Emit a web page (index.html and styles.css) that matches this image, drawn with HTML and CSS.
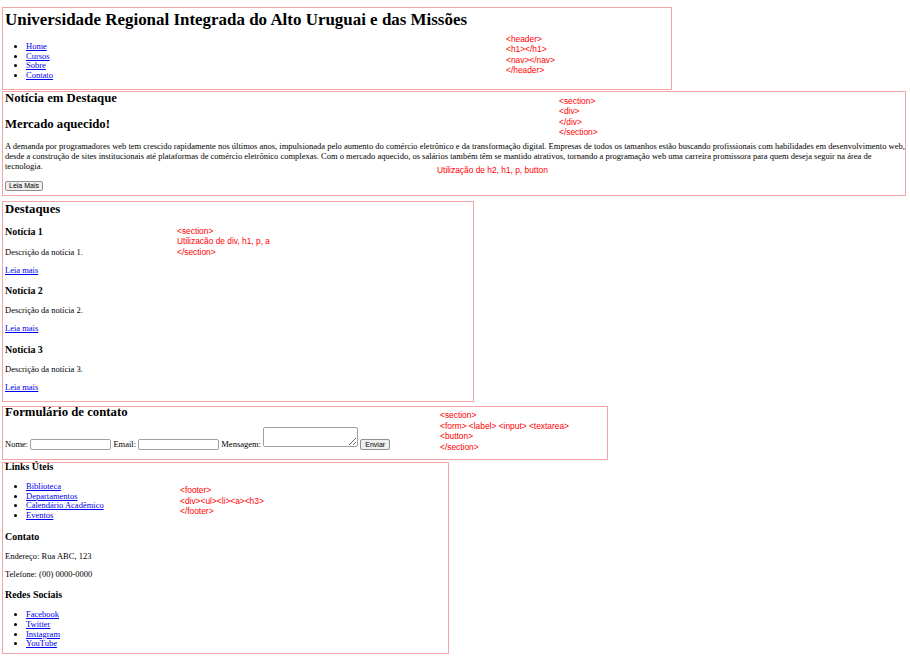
FILE: index.html
```html
<!DOCTYPE html>
<html lang="pt-BR">
<head>
    <meta charset="UTF-8">
    <meta name="viewport" content="width=device-width, initial-scale=1.0">
    <title>URI - Universidade Regional Integrada</title>
    <link rel="stylesheet" href="styles.css">
</head>
<body>
    <header class="box site-header">
        <h1>Universidade Regional Integrada do Alto Uruguai e das Missões</h1>
        <div class="row">
            <nav class="main-nav">
                <ul>
                    <li><a href="#">Home</a></li>
                    <li><a href="#">Cursos</a></li>
                    <li><a href="#">Sobre</a></li>
                    <li><a href="#">Contato</a></li>
                </ul>
            </nav>
            <div class="note note-header">&lt;header&gt;<br>&lt;h1&gt;&lt;/h1&gt;<br>&lt;nav&gt;&lt;/nav&gt;<br>&lt;/header&gt;</div>
        </div>
    </header>

    <section class="box featured">
        <div class="row">
            <div class="featured-titles">
                <h2>Notícia em Destaque</h2>
                <h1>Mercado aquecido!</h1>
            </div>
            <div class="note note-featured">&lt;section&gt;<br>&lt;div&gt;<br>&lt;/div&gt;<br>&lt;/section&gt;</div>
        </div>
        <p>A demanda por programadores web tem crescido rapidamente nos últimos anos, impulsionada pelo aumento do comércio eletrônico e da transformação digital. Empresas de todos os tamanhos estão buscando profissionais com habilidades em desenvolvimento web, desde a construção de sites institucionais até plataformas de comércio eletrônico complexas. Com o mercado aquecido, os salários também têm se mantido atrativos, tornando a programação web uma carreira promissora para quem deseja seguir na área de tecnologia.</p>
        <p class="note usage">Utilização de h2, h1, p, button</p>
        <button class="btn">Leia Mais</button>
    </section>

    <section class="box highlights">
        <h2>Destaques</h2>
        <div class="row">
            <div class="news-list">
                <div class="news">
                    <h3>Notícia 1</h3>
                    <p>Descrição da notícia 1.</p>
                    <p><a href="#">Leia mais</a></p>
                </div>
                <div class="news">
                    <h3>Notícia 2</h3>
                    <p>Descrição da notícia 2.</p>
                    <p><a href="#">Leia mais</a></p>
                </div>
                <div class="news">
                    <h3>Notícia 3</h3>
                    <p>Descrição da notícia 3.</p>
                    <p><a href="#">Leia mais</a></p>
                </div>
            </div>
            <div class="note note-highlights">&lt;section&gt;<br>Utilizacão de div, h1, p, a<br>&lt;/section&gt;</div>
        </div>
    </section>

    <section class="box contact">
        <div class="row">
            <div class="contact-main">
                <h2>Formulário de contato</h2>
                <form class="contact-form">
                    <label for="nome">Nome:</label>
                    <input type="text" id="nome" name="nome">
                    <label for="email">Email:</label>
                    <input type="email" id="email" name="email">
                    <label for="mensagem">Mensagem:</label>
                    <textarea id="mensagem" name="mensagem"></textarea>
                    <button type="submit" class="btn">Enviar</button>
                </form>
            </div>
            <div class="note note-contact">&lt;section&gt;<br>&lt;form&gt; &lt;label&gt; &lt;input&gt; &lt;textarea&gt;<br>&lt;button&gt;<br>&lt;/section&gt;</div>
        </div>
    </section>

    <footer class="box site-footer">
        <div class="row">
            <div class="footer-links">
                <h3>Links Úteis</h3>
                <ul>
                    <li><a href="#">Biblioteca</a></li>
                    <li><a href="#">Departamentos</a></li>
                    <li><a href="#">Calendário Acadêmico</a></li>
                    <li><a href="#">Eventos</a></li>
                </ul>
                <h3>Contato</h3>
                <p>Endereço: Rua ABC, 123</p>
                <p>Telefone: (00) 0000-0000</p>
                <h3>Redes Sociais</h3>
                <ul class="last">
                    <li><a href="#">Facebook</a></li>
                    <li><a href="#">Twitter</a></li>
                    <li><a href="#">Instagram</a></li>
                    <li><a href="#">YouTube</a></li>
                </ul>
            </div>
            <div class="note note-footer">&lt;footer&gt;<br>&lt;div&gt;&lt;ul&gt;&lt;li&gt;&lt;a&gt;&lt;h3&gt;<br>&lt;/footer&gt;</div>
        </div>
    </footer>
</body>
</html>
```

FILE: styles.css
```css
body {
    font-family: "Liberation Serif", "Times New Roman", serif;
    font-size: 8.5px;
    line-height: 1.127;
    margin: 7px 2px;
    background-color: #fff;
    color: #000;
}

a {
    color: #0000ee;
}

h1 {
    font-size: 2em;
}

h2 {
    font-size: 1.5em;
}

h3 {
    font-size: 1.17em;
    margin: 1em 0;
}

p {
    margin: 1em 0;
}

ul {
    margin: 1em 0;
    padding-left: 21px;
}

.box {
    box-sizing: border-box;
    border: 1px solid #f3a4a4;
    padding: 0 2px;
}

.row {
    display: flex;
    align-items: flex-start;
}

.note {
    font-family: "Liberation Sans", Arial, sans-serif;
    font-size: 8.4px;
    line-height: 10.5px;
    color: #ff0000;
}

.btn {
    display: block;
    font-family: "Liberation Sans", Arial, sans-serif;
    font-size: 7px;
    line-height: 8px;
    height: 10px;
    padding: 0 3px;
    background-color: #efefef;
    border: 1px solid #8f8f8f;
    border-radius: 2px;
    color: #000;
}

/* header */
.site-header {
    width: 670px;
    margin-bottom: 1.5px;
}

.site-header h1 {
    font-size: 16.95px;
    margin: 2px 0 0;
}

.main-nav {
    width: 501px;
}

.main-nav ul {
    margin: 13px 0 8.2px;
}

.note-header {
    margin-top: 4.6px;
}

/* noticia em destaque */
.featured {
    width: 904px;
    padding-right: 0;
    margin-bottom: 5px;
}

.featured-titles {
    width: 554px;
}

.featured h2 {
    margin: -1px 0 0;
}

.featured h1 {
    font-size: 1.5em;
    margin: 11.4px 0 0;
}

.note-featured {
    margin-top: 3.75px;
}

.featured p {
    margin: 4.5px 0 0;
}

.featured .usage {
    margin: -5.9px 0 0;
    padding-left: 432px;
}

.featured .btn {
    margin: 5px 0 4.5px;
}

/* destaques */
.highlights {
    width: 472px;
    margin-bottom: 3.5px;
}

.highlights h2 {
    margin: 0;
}

.news-list {
    width: 172px;
}

.note-highlights {
    margin-top: 9.3px;
}

/* formulario */
.contact {
    width: 606px;
    margin-bottom: 2px;
}

.contact-main {
    width: 435px;
}

.contact h2 {
    margin: -1.5px 0 0;
}

.contact-form {
    margin: 7px 0 8.5px;
}

.contact-form input {
    box-sizing: border-box;
    width: 81px;
    height: 11px;
    padding: 0 2px;
    font-size: 7px;
    border: 1px solid #a0a0a0;
    border-radius: 2px;
}

.contact-form textarea {
    box-sizing: border-box;
    width: 95px;
    height: 20px;
    font-size: 7px;
    border: 1px solid #a0a0a0;
    border-radius: 2px;
    margin: 0;
}

.contact-form .btn {
    display: inline-block;
    height: 11px;
    width: 30px;
    padding: 0;
}

.note-contact {
    margin-top: 3.5px;
}

/* footer */
.site-footer {
    width: 447px;
}

.footer-links {
    width: 175px;
}

.footer-links h3:first-child {
    margin-top: -1.5px;
}

.footer-links ul {
    margin: 8.9px 0 10px;
}

.footer-links ul.last {
    margin-bottom: 4.5px;
}

.note-footer {
    margin-top: 22.5px;
}
```
